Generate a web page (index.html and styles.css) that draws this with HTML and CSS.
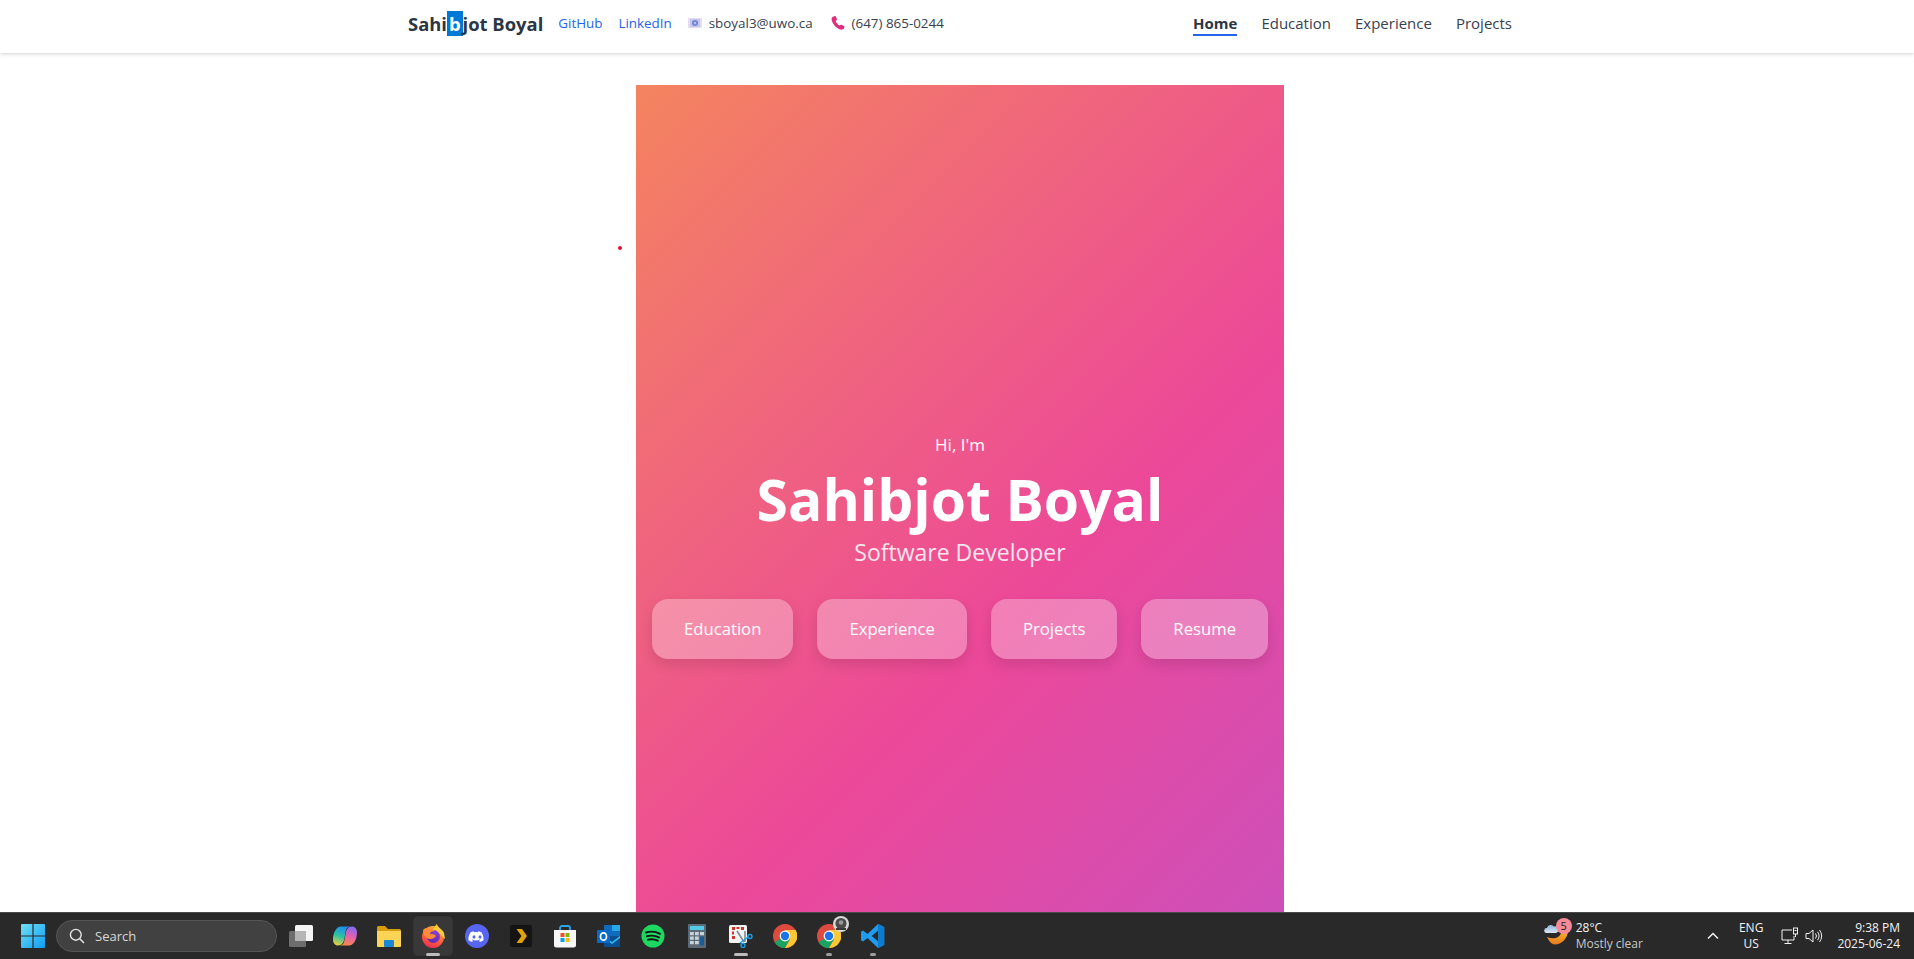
FILE: index.html
```html
<!DOCTYPE html>
<html lang="en">
<head>
<meta charset="utf-8">
<title>Sahibjot Boyal</title>
<link rel="stylesheet" href="styles.css">
</head>
<body>

<!-- top nav -->
<header class="topbar">
  <div class="brand-group">
    <span class="brand">Sahi<span class="picked">b</span>jot Boyal</span>
    <a class="ext" href="#">GitHub</a>
    <a class="ext" href="#">LinkedIn</a>
    <span class="contact contact-mail">
      <svg class="mail-ic" viewBox="0 0 14 10" width="14" height="10"><rect width="14" height="10" fill="#e4dcf2"/><rect x="2" y="1" width="10" height="8" fill="#c9c6ea"/><circle cx="7" cy="5" r="3" fill="#6f86d8"/><circle cx="7" cy="5" r="1.2" fill="#b9c6f0"/></svg>
      sboyal3@uwo.ca
    </span>
    <span class="contact">
      <svg class="phone-ic" viewBox="0 0 14 14" width="14" height="14"><path d="M2.4 0.4 L4.6 0 L6.2 3.6 L4.6 5 C5.2 6.8 6.6 8.6 8.6 9.6 L10.2 8.4 L13.6 10.6 L13 12.6 C12.4 13.6 10.8 14 9.4 13.6 C5.2 12.4 1.4 8 0.6 3.6 C0.4 2.2 1.2 0.8 2.4 0.4 Z" fill="#dc2f7e"/></svg>
      (647) 865-0244
    </span>
  </div>
  <nav class="menu">
    <a class="menu-item is-active" href="#">Home</a>
    <a class="menu-item" href="#">Education</a>
    <a class="menu-item" href="#">Experience</a>
    <a class="menu-item" href="#">Projects</a>
  </nav>
</header>

<main class="stage">
  <span class="red-dot"></span>
  <section class="hero">
    <p class="hi">Hi, I'm</p>
    <h1 class="name">Sahibjot Boyal</h1>
    <p class="role">Software Developer</p>
    <div class="hero-btns">
      <a class="hero-btn" href="#">Education</a>
      <a class="hero-btn" href="#">Experience</a>
      <a class="hero-btn" href="#">Projects</a>
      <a class="hero-btn" href="#">Resume</a>
    </div>
  </section>
</main>

<!-- windows taskbar -->
<footer class="taskbar">
  <div class="tb-left">
    <span class="slot slot-start">
      <svg viewBox="0 0 24 24" width="24" height="24"><defs><linearGradient id="win" x1="0" y1="0" x2="1" y2="1"><stop offset="0" stop-color="#6fe0f7"/><stop offset="1" stop-color="#0f9cf2"/></linearGradient></defs><path fill="url(#win)" d="M0 1a1 1 0 0 1 1-1h10.4v11.4H0zM12.6 0H23a1 1 0 0 1 1 1v10.4H12.6zM0 12.6h11.4V24H1a1 1 0 0 1-1-1zM12.6 12.6H24V23a1 1 0 0 1-1 1H12.6z"/></svg>
    </span>
    <div class="search">
      <svg viewBox="0 0 16 16" width="16" height="16"><circle cx="6.8" cy="6.8" r="5.4" fill="none" stroke="#e6e6e6" stroke-width="1.4"/><path d="M10.8 10.8L15 15" stroke="#e6e6e6" stroke-width="1.5"/></svg>
      <span>Search</span>
    </div>
    <div class="slots">
      <span class="slot">
        <svg viewBox="0 0 24 24" width="24" height="24"><rect x="0" y="7" width="17" height="16" rx="1.5" fill="#6d6d6d"/><rect x="6" y="1" width="18" height="16" rx="1.5" fill="#f4f4f4"/><rect x="6" y="7" width="11" height="10" fill="#b5b5b5"/></svg>
      </span>
      <span class="slot">
        <svg viewBox="0 0 24 24" width="24" height="24"><defs><linearGradient id="cpa" x1="0.5" y1="0" x2="0.2" y2="1"><stop offset="0" stop-color="#1b8ff0"/><stop offset=".5" stop-color="#2fc4a0"/><stop offset="1" stop-color="#f5cf3a"/></linearGradient><linearGradient id="cpb" x1="0.7" y1="0" x2="0.4" y2="1"><stop offset="0" stop-color="#7f6cf2"/><stop offset=".5" stop-color="#e65fb0"/><stop offset="1" stop-color="#f58a4c"/></linearGradient></defs><path fill="url(#cpa)" d="M8 2.500H17C14 3 13 5 12.500 8L11.500 14C11 18 9 21.500 5 21.500 2 21.500 0 19 0 15.500 0 8.500 3.500 2.500 8 2.500z"/><path fill="url(#cpb)" d="M16 21.500H7C10 21 11 19 11.500 16L12.500 10C13 6 15 2.500 19 2.500 22 2.500 24 5 24 8.500 24 15.500 20.500 21.500 16 21.500z"/></svg>
      </span>
      <span class="slot">
        <svg viewBox="0 0 24 24" width="24" height="24"><path d="M0 3.500A1.500 1.500 0 0 1 1.500 2H8l3 3h11.500A1.500 1.500 0 0 1 24 6.500V10H0z" fill="#d79c12"/><path d="M0 7h24v15a1 1 0 0 1-1 1H1a1 1 0 0 1-1-1z" fill="#fbd455"/><rect x="7" y="16" width="10" height="7" rx="1" fill="#1a87d6"/></svg>
      </span>
      <span class="slot slot-open">
        <svg viewBox="0 0 24 24" width="24" height="24"><defs><linearGradient id="ffx" x1="0.7" y1="0" x2="0.3" y2="1"><stop offset="0" stop-color="#ffb52e"/><stop offset=".5" stop-color="#ff6b38"/><stop offset="1" stop-color="#ea2b55"/></linearGradient><linearGradient id="ffp" x1="0.8" y1="0" x2="0.2" y2="1"><stop offset="0" stop-color="#8b3fd6"/><stop offset="1" stop-color="#5b2bb0"/></linearGradient></defs><circle cx="12" cy="13" r="11" fill="url(#ffx)"/><path d="M16 0c0 3 5 5 7 9l1 6-5-5c-2-2-5-2-7-3 0-3 2-5 4-7z" fill="#ffc93c"/><circle cx="12.500" cy="12.500" r="6.500" fill="url(#ffp)"/><path d="M2 6c1-1 2-2 3-2l1 2c3-1 6-1 8 1-3 0-5 1-5 3 2 0 5 0 6 2-2 3-6 4-9 2-3-2-4-5-4-8z" fill="#ff8a3a"/></svg>
        <i class="pill pill-wide"></i>
      </span>
      <span class="slot">
        <svg viewBox="0 0 24 24" width="24" height="24"><circle cx="12" cy="12" r="12" fill="#5865f2"/><path d="M8.600 7.200c-1.200.2-2.300.6-3.200 1.200C3.800 11 3.200 13.600 3.500 16.200c1.200.9 2.500 1.500 3.700 1.800l.9-1.400c-.5-.2-1-.4-1.400-.7l.3-.3c2.700 1.200 5.500 1.200 8 0l.3.3c-.5.3-.9.500-1.400.7l.9 1.400c1.300-.3 2.500-.9 3.700-1.800.3-3-.5-5.500-1.900-7.800-1-.6-2-1-3.200-1.200l-.5 1c-1.300-.2-2.500-.2-3.800 0z" fill="#fff"/><ellipse cx="9" cy="13" rx="1.500" ry="1.700" fill="#5865f2"/><ellipse cx="15" cy="13" rx="1.500" ry="1.700" fill="#5865f2"/></svg>
      </span>
      <span class="slot">
        <svg viewBox="0 0 24 24" width="24" height="24"><rect x="1" y="1" width="22" height="22" rx="2" fill="#141414"/><path d="M7.500 5h5.500l5 7-5 7H7.500l5-7z" fill="#e5a00d"/></svg>
      </span>
      <span class="slot">
        <svg viewBox="0 0 24 24" width="24" height="24"><path d="M7 7V4a2 2 0 0 1 2-2h6a2 2 0 0 1 2 2v3" fill="none" stroke="#2aa5e8" stroke-width="1.800"/><path d="M1 6h22v15a2.500 2.500 0 0 1-2.500 2.500h-17A2.500 2.500 0 0 1 1 21z" fill="#f7f7f7"/><rect x="7.500" y="9" width="4" height="4" fill="#f25022"/><rect x="12.500" y="9" width="4" height="4" fill="#7fba00"/><rect x="7.500" y="14" width="4" height="4" fill="#00a4ef"/><rect x="12.500" y="14" width="4" height="4" fill="#ffb900"/></svg>
      </span>
      <span class="slot">
        <svg viewBox="0 0 24 24" width="24" height="24"><rect x="7" y="1" width="16" height="11" fill="#0f6cbd"/><rect x="15" y="1" width="8" height="6" fill="#28a8ea"/><path d="M7 12h16v10a1 1 0 0 1-1 1H7z" fill="#0a4f8f"/><path d="M7 12l8 6 8-6v2l-8 6-8-6z" fill="#35b8f1"/><rect x="0" y="6" width="13" height="13" rx="1" fill="#0a6ac7"/><ellipse cx="6.500" cy="12.500" rx="3" ry="3.700" fill="none" stroke="#fff" stroke-width="1.700"/></svg>
      </span>
      <span class="slot">
        <svg viewBox="0 0 24 24" width="24" height="24"><circle cx="12" cy="12" r="11.500" fill="#1ed760"/><path d="M5 8.500c4.500-1.300 10-.9 14 1.300M6 12.200c4-1 8.500-.6 12 1.200M7 15.700c3.300-.8 7-.5 9.800 1" fill="none" stroke="#141414" stroke-width="1.900" stroke-linecap="round"/></svg>
      </span>
      <span class="slot">
        <svg viewBox="0 0 24 24" width="24" height="24"><rect x="3" y="0" width="18" height="24" rx="1" fill="#5c6b78"/><rect x="5" y="2" width="14" height="4" fill="#53cbe8"/><path d="M5 8h3.800v3.200H5zM10 8h3.800v3.200H10zM15 8h4v3.200h-4zM5 12.500h3.800v3.200H5zM10 12.500h3.800v3.200H10zM5 17h3.800v3.200H5zM10 17h3.800v3.200H10z" fill="#c9d3da"/><rect x="15" y="12.500" width="4" height="9" fill="#1d5b94"/></svg>
      </span>
      <span class="slot">
        <svg viewBox="0 0 24 24" width="24" height="24"><rect x="0" y="1" width="18" height="18" rx="1.500" fill="#f3f3f3"/><path d="M3 3h3v3H3zM7.500 3h3v2h-3zM12 3h3v3h-3zM3 7.500h2v3H3zM3 12h3v3H3z" fill="#c8372d"/><path d="M8 7l7 11M16 7v11" stroke="#7d8a96" stroke-width="1.600"/><circle cx="21" cy="12.500" r="2" fill="none" stroke="#1d9ce0" stroke-width="1.500"/><circle cx="14" cy="21.500" r="2" fill="none" stroke="#1d9ce0" stroke-width="1.500"/><path d="M11 19l8-6" stroke="#1d9ce0" stroke-width="1.300"/></svg>
        <i class="pill pill-wide"></i>
      </span>
      <span class="slot">
        <svg viewBox="0 0 24 24" width="24" height="24"><circle cx="12" cy="12" r="12" fill="#dd4b3e"/><path d="M12 12L1.600 18A12 12 0 0 0 12 24l5.200-9z" fill="#1aa260"/><path d="M12 6h10.600A12 12 0 0 1 12 24l5.200-9z" fill="#fcc934"/><circle cx="12" cy="12" r="5.400" fill="#fff"/><circle cx="12" cy="12" r="4.200" fill="#1a73e8"/></svg>
      </span>
      <span class="slot">
        <svg viewBox="0 0 24 24" width="24" height="24"><circle cx="12" cy="12" r="12" fill="#dd4b3e"/><path d="M12 12L1.600 18A12 12 0 0 0 12 24l5.200-9z" fill="#1aa260"/><path d="M12 6h10.600A12 12 0 0 1 12 24l5.200-9z" fill="#fcc934"/><circle cx="12" cy="12" r="5.400" fill="#fff"/><circle cx="12" cy="12" r="4.200" fill="#1a73e8"/></svg>
        <svg class="chrome-badge" viewBox="0 0 16 16" width="16" height="16"><circle cx="8" cy="8" r="8" fill="#d8d8d8"/><circle cx="8" cy="7.500" r="5.500" fill="#4a4a4a"/><circle cx="8" cy="6.500" r="2.300" fill="#9a9a9a"/><rect x="3" y="12" width="10" height="2" fill="#3a3a3a"/></svg>
        <i class="pill"></i>
      </span>
      <span class="slot">
        <svg viewBox="0 0 24 24" width="24" height="24"><path d="M17 0l6.200 3v18L17 24 6.500 14 2 17.500 0 16.300V7.700L2 6.500 6.500 10zM17 6.800L11 12l6 5.200z" fill="#1f9cf0"/><path d="M17 0l6.200 3v18L17 24z" fill="#0a7cd0"/><path d="M17 6.800L11 12l6 5.200z" fill="#292929"/></svg>
        <i class="pill"></i>
      </span>
    </div>
  </div>

  <div class="tray">
    <div class="weather">
      <span class="weather-ic">
        <svg viewBox="0 0 26 26" width="26" height="26"><defs><linearGradient id="moon" x1="0" y1="0" x2="0" y2="1"><stop offset="0" stop-color="#f9b92e"/><stop offset="1" stop-color="#e8781e"/></linearGradient><linearGradient id="cloud" x1="0" y1="0" x2="0" y2="1"><stop offset="0" stop-color="#8fb4de"/><stop offset="1" stop-color="#dbe7f4"/></linearGradient></defs><path d="M24 7C24 16 17 21.500 11 21.500 7.500 21.500 5 18 3 14 10 17 17 15 18 7z" fill="url(#moon)"/><path d="M3 5a4 4 0 0 1 7-1.500A3.200 3.200 0 0 1 12 10H2.500a2.500 2.500 0 0 1 .5-5z" fill="url(#cloud)"/></svg>
        <b class="badge">5</b>
      </span>
      <div class="weather-txt">
        <span>28°C</span>
        <span class="dim">Mostly clear</span>
      </div>
    </div>
    <svg class="chevron" viewBox="0 0 12 8" width="12" height="8"><path d="M1 6.500L6 1.500l5 5" fill="none" stroke="#f2f2f2" stroke-width="1.500"/></svg>
    <div class="lang"><span>ENG</span><span>US</span></div>
    <svg class="net-ic" viewBox="0 0 18 18" width="18" height="18"><path d="M11 3H1v10h12V9M7 13v3M3.500 16.500h7" fill="none" stroke="#f2f2f2" stroke-width="1"/><rect x="12.500" y="1" width="4" height="6" fill="none" stroke="#f2f2f2"/><path d="M14.500 7v3M13.500 3.500h2" stroke="#f2f2f2"/></svg>
    <svg class="vol-ic" viewBox="0 0 18 18" width="18" height="18"><path d="M1 6.500h3L8 3v12l-4-3.500H1z" fill="none" stroke="#f2f2f2"/><path d="M10.500 6.500a4 4 0 0 1 0 5M12.500 4.800a7 7 0 0 1 0 8.400M14.500 3a9.500 9.500 0 0 1 0 12" fill="none" stroke="#f2f2f2"/></svg>
    <div class="clock"><span>9:38 PM</span><span>2025-06-24</span></div>
  </div>
</footer>

</body>
</html>
```

FILE: styles.css
```css
* {
    box-sizing: border-box;
}
html, body {
    height: 100%;
}
body {
    margin: 0;
    display: flex;
    flex-direction: column;
    overflow: hidden;
    background: #fff;
    font-family: "Open Sans", "Noto Sans", sans-serif;
    color: #374151;
}
a {
    text-decoration: none;
    color: inherit;
}
p, h1 {
    margin: 0;
}

/* top nav */
.topbar {
    flex: none;
    height: 53px;
    display: flex;
    align-items: center;
    justify-content: space-between;
    padding: 0 402px 7px 408px;
    box-shadow: 0 1px 4px rgba(0, 0, 0, .18);
    position: relative;
    z-index: 2;
    background: #fff;
}
.brand-group {
    display: flex;
    align-items: center;
    font-size: 13.400px;
}
.brand {
    font-size: 18.400px;
    font-weight: 700;
    color: #2b3544;
    margin-right: 15px;
}
.picked {
    background: #0078d7;
    color: #fff;
    display: inline-block;
    padding: 0 2px;
}
.ext {
    color: #2563eb;
    margin-right: 16px;
}
.contact {
    display: flex;
    align-items: center;
    gap: 7px;
    color: #374151;
}
.contact-mail {
    margin-right: 18px;
}
.menu {
    display: flex;
    gap: 24px;
    font-size: 15px;
}
.menu-item {
    padding: 3px 0 1px;
    border-bottom: 2px solid transparent;
}
.is-active {
    font-weight: 700;
    color: #2b3544;
    border-bottom-color: #2563eb;
}

/* hero */
.stage {
    flex: 1;
    min-height: 0;
    overflow: hidden;
    padding: 32px 0 0 636px;
    position: relative;
}
.red-dot {
    position: absolute;
    left: 618px;
    top: 193px;
    width: 4px;
    height: 4px;
    border-radius: 50%;
    background: #e8112d;
}
.hero {
    width: 648px;
    height: 922px;
    display: flex;
    flex-direction: column;
    align-items: center;
    justify-content: center;
    background: linear-gradient(135deg, #f4845f 0%, #ec4899 58%, #c053c8 110%);
    color: #fff;
}
.hi {
    font-size: 17px;
    margin-bottom: 6px;
}
.name {
    font-size: 57px;
    line-height: 1.3;
    font-weight: 700;
    margin-bottom: -1px;
}
.role {
    font-size: 23px;
    opacity: .85;
}
.hero-btns {
    display: flex;
    gap: 24px;
    margin-top: 31px;
}
.hero-btn {
    height: 60px;
    padding: 0 32px;
    display: flex;
    align-items: center;
    font-size: 16.700px;
    border-radius: 16px;
    background: rgba(255, 255, 255, .3);
    box-shadow: 0 6px 14px rgba(0, 0, 0, .12);
}

/* taskbar */
.taskbar {
    flex: none;
    height: 47px;
    display: flex;
    justify-content: space-between;
    align-items: center;
    background: #292929;
    border-top: 1px solid #4a4a4a;
    color: #f2f2f2;
    font-size: 12px;
    position: relative;
    z-index: 3;
}
.tb-left {
    display: flex;
    align-items: center;
}
.slots {
    display: flex;
    margin-left: 2px;
}
.slot {
    width: 44px;
    height: 40px;
    display: flex;
    align-items: center;
    justify-content: center;
    position: relative;
    border-radius: 5px;
}
.slot-start {
    margin: 0 1px 0 11px;
}
.slot-open {
    background: #383838;
    box-shadow: inset 0 0 0 1px #333;
    width: 40px;
    margin: 0 2px;
}
.pill {
    position: absolute;
    bottom: 0;
    left: 50%;
    width: 6px;
    height: 3px;
    margin-left: -3px;
    border-radius: 2px;
    background: #9e9e9e;
}
.pill-wide {
    width: 14px;
    margin-left: -7px;
    background: #bdbdbd;
}
.chrome-badge {
    position: absolute;
    right: 2px;
    top: 0;
}
.search {
    width: 221px;
    height: 32px;
    display: flex;
    align-items: center;
    gap: 10px;
    padding-left: 12px;
    border-radius: 16px;
    background: #414141;
    border: 1px solid #555;
    font-size: 13px;
    color: #d8d8d8;
}
.tray {
    display: flex;
    align-items: center;
    padding-right: 14px;
}
.weather {
    display: flex;
    align-items: center;
    gap: 6px;
    margin-right: 64px;
}
.weather-ic {
    position: relative;
    display: flex;
}
.badge {
    position: absolute;
    right: -2px;
    top: -5px;
    width: 16px;
    height: 16px;
    border-radius: 50%;
    background: #f78a96;
    color: #222;
    font-weight: 400;
    font-size: 11px;
    line-height: 16px;
    text-align: center;
}
.weather-txt, .lang, .clock {
    display: flex;
    flex-direction: column;
    line-height: 16px;
}
.dim {
    color: #c8c8c8;
}
.chevron {
    margin-right: 20px;
}
.lang {
    align-items: center;
    margin-right: 18px;
}
.net-ic {
    margin-right: 6px;
}
.vol-ic {
    margin-right: 14px;
}
.clock {
    align-items: flex-end;
}
```
